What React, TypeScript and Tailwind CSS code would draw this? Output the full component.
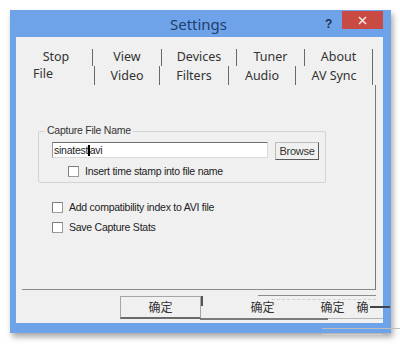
const tabsTop = [
  { label: 'Stop', w: 'w-[73px]' },
  { label: 'View', w: 'w-[69px]' },
  { label: 'Devices', w: 'w-[75px]' },
  { label: 'Tuner', w: 'w-[68px]' },
  { label: 'About', w: 'w-[68px]' },
];

const tabsBottom = [
  { label: 'File', w: 'w-[75px]' },
  { label: 'Video', w: 'w-[65px]' },
  { label: 'Filters', w: 'w-[69px]' },
  { label: 'Audio', w: 'w-[67px]' },
  { label: 'AV Sync', w: 'w-[77px]' },
];

const Check = ({ label }: { label: string }) => (
  <div className="flex items-center h-[11px]">
    <span className="w-[11px] h-[11px] bg-white border border-[#9a9a9a] border-t-[#7d7d7d] border-l-[#7d7d7d]" />
    <span className="ml-[6px] leading-none">{label}</span>
  </div>
);

export default function App() {
  return (
    <main className="w-[400px] h-[345px] bg-white overflow-hidden pt-[10px] pl-[10px] relative">
      {/* window frame */}
      <div className="w-[381px] h-[323px] bg-[#6ea3ea] shadow-[2px_4px_6px_rgba(0,0,0,0.35)] flex flex-col">
        {/* title bar */}
        <div className="h-[27px] relative flex items-center justify-center">
          <span className="text-[15px] text-[#22406a] font-['Noto_Sans',sans-serif] leading-none mt-[1px] ml-[-4px]">
            Settings
          </span>
          <span className="absolute left-[315px] top-[5px] text-[12px] font-bold text-[#1c2f55] font-['Liberation_Sans',sans-serif]">
            ?
          </span>
          <div className="absolute left-[332px] top-[1px] w-[41px] h-[18px] bg-[#c94a42] flex items-center justify-center">
            <svg width="9" height="9" viewBox="0 0 9 9">
              <path d="M1 1 L8 8 M8 1 L1 8" stroke="#f6e4e2" strokeWidth="1.6" />
            </svg>
          </div>
        </div>

        {/* client area */}
        <div className="ml-[6px] w-[367px] h-[286px] bg-[#f0f0f0] flex flex-col font-['Liberation_Sans',sans-serif] text-[10.5px] tracking-[-0.25px] text-[#222]">
          {/* tabs */}
          <div className="mt-[12px] ml-[4px] font-['Noto_Sans',sans-serif] text-[12.5px] tracking-normal text-[#333]">
            <div className="flex h-[17px]">
              {tabsTop.map((t) => (
                <div key={t.label} className={`${t.w} h-[17px] flex items-center justify-center border-r-[1.5px] border-[#6a6a6a] leading-none`}>
                  {t.label}
                </div>
              ))}
            </div>
            <div className="flex h-[19px]">
              {tabsBottom.map((t, i) => (
                <div
                  key={t.label}
                  className={`${t.w} h-[19px] flex justify-center border-r-[1.5px] border-[#6a6a6a] leading-none ${i === 0 ? 'items-start pt-[2px] pr-[28px]' : 'items-center pt-[2px]'}`}
                >
                  {t.label}
                </div>
              ))}
            </div>
          </div>

          {/* tab page */}
          <div className="ml-[6px] w-[354px] h-[205px] border-r-[1.5px] border-b border-r-[#777] border-b-[#8a8a8a] flex flex-col">
            {/* group box */}
            <div className="mt-[46px] ml-[16px] w-[288px] h-[52px] border border-[#d0d5d9] rounded-[2px] relative">
              <span className="absolute left-[6px] top-[-7px] px-[2px] bg-[#f0f0f0] leading-none text-[#333]">
                Capture File Name
              </span>
              <div className="flex mt-[10px] ml-[13px]">
                <div className="w-[216px] h-[16px] bg-white border border-[#dadada] border-t-[#707070] border-l-[#9a9a9a] flex items-center pl-[1px] leading-none">
                  <span>sinatest</span>
                  <span className="w-[1.5px] h-[11px] bg-black" />
                  <span>avi</span>
                </div>
                <div className="ml-[7px] w-[44px] h-[18px] border border-[#bcbcbc] border-r-[#5a5a5a] border-b-[#5a5a5a] flex items-center justify-center leading-none text-[11px] text-[#333]">
                  Browse
                </div>
              </div>
              <div className="mt-[6px] ml-[29px]">
                <Check label="Insert time stamp into file name" />
              </div>
            </div>

            <div className="mt-[19px] ml-[30px] flex flex-col gap-[9px]">
              <Check label="Add compatibility index to AVI file" />
              <Check label="Save Capture Stats" />
            </div>
          </div>

          {/* bottom buttons */}
          <div className="relative flex-1 flex items-start font-['Noto_Sans_CJK_SC',sans-serif] text-[12px] tracking-normal text-[#333]">
            <div className="mt-[6px] ml-[104px] w-[81px] h-[23px] border border-[#a5a5a5] border-b-[#6a6a6a] border-b-2 flex items-center justify-center leading-none">
              确定
            </div>
            <div className="mt-[6px] w-[1.5px] h-[10px] bg-[#555]" />
            <span className="mt-[11px] ml-[48px] leading-none">确定</span>
            <span className="mt-[11px] ml-[46px] leading-none">确定</span>
            <span className="mt-[11px] ml-[12px] leading-none">确</span>
            {/* stray lines */}
            <div className="absolute left-[184px] top-[28px] w-[128px] h-[2px] bg-[#7a7a7a]" />
            <div className="absolute left-[312px] top-[28px] w-[55px] h-px bg-[#b5b5b5]" />
            <div className="absolute left-[242px] top-[5px] w-[118px] h-px bg-[#8c8c8c]" />
            <div className="absolute left-[256px] top-[9px] w-[104px] border-t border-dashed border-[#cfcfcf]" />
            <div className="absolute left-[354px] top-[16px] w-[20px] h-[1.5px] bg-[#444]" />
          </div>
        </div>
      </div>
      <div className="absolute left-[322px] top-[328px] w-[78px] h-px bg-[#bdbdbd]" />
      <div className="absolute left-[322px] top-[334px] w-[60px] h-px bg-[#cfcfcf]" />
    </main>
  );
}
